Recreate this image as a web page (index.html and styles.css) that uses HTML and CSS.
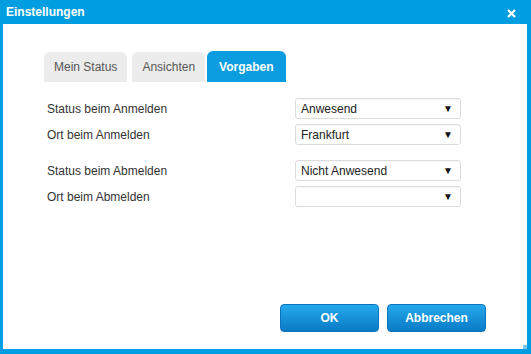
FILE: index.html
```html
<!DOCTYPE html>
<html lang="de">
<head>
<meta charset="utf-8">
<title>Einstellungen</title>
<link rel="stylesheet" href="styles.css">
</head>
<body>
<div class="dialog">
  <div class="titlebar">
    <span class="title">Einstellungen</span>
    <span class="close">
      <svg width="9" height="9" viewBox="0 0 9 9"><path d="M1 1 L8 8 M8 1 L1 8" stroke="#fff" stroke-width="2.2" stroke-linecap="butt"/></svg>
    </span>
  </div>
  <div class="content">
    <div class="tabs">
      <div class="tab">Mein Status</div>
      <div class="tab">Ansichten</div>
      <div class="tab active">Vorgaben</div>
    </div>
    <div class="form">
      <div class="group">
        <div class="row"><span class="label">Status beim Anmelden</span><div class="select"><span>Anwesend</span><span class="arrow">▼</span></div></div>
        <div class="row"><span class="label">Ort beim Anmelden</span><div class="select"><span>Frankfurt</span><span class="arrow">▼</span></div></div>
      </div>
      <div class="group">
        <div class="row"><span class="label">Status beim Abmelden</span><div class="select"><span>Nicht Anwesend</span><span class="arrow">▼</span></div></div>
        <div class="row"><span class="label">Ort beim Abmelden</span><div class="select"><span></span><span class="arrow">▼</span></div></div>
      </div>
    </div>
    <div class="buttons">
      <button class="btn">OK</button>
      <button class="btn">Abbrechen</button>
    </div>
    <div class="grip"></div>
  </div>
</div>
</body>
</html>
```
FILE: styles.css
```css
* { box-sizing: border-box; }
html, body { margin: 0; padding: 0; }
body {
  font-family: "Liberation Sans", Arial, sans-serif;
  font-size: 12px;
  color: #222;
  background: #fff;
}
.dialog {
  width: 531px;
  height: 354px;
  background: #009ee0;
  display: flex;
  flex-direction: column;
  padding: 0 4px 5px 3px;
}
.titlebar {
  height: 24px;
  display: flex;
  align-items: center;
  justify-content: space-between;
  padding: 0 11px 1px 3px;
  color: #fff;
}
.title {
  font-weight: bold;
  font-size: 12px;
}
.close {
  display: flex;
  margin-top: 3px;
}
.content {
  flex: 1;
  background: #fff;
  position: relative;
  display: flex;
  flex-direction: column;
  padding: 27px 0 0 41px;
}
.tabs {
  display: flex;
  align-items: flex-end;
  height: 31px;
}
.tab {
  height: 30px;
  padding: 0 10px;
  margin-right: 5px;
  display: flex;
  align-items: center;
  background: #ececec;
  color: #555;
  border-radius: 6px 6px 0 0;
  font-size: 12px;
}
.tab:nth-child(2) { margin-right: 2px; }
.tab.active {
  height: 31px;
  background: #0b9de0;
  color: #fff;
  font-weight: bold;
  padding: 0 12px;
  margin-right: 0;
}
.form {
  margin-top: 16px;
  margin-left: 3px;
  display: flex;
  flex-direction: column;
  gap: 15px;
}
.group {
  display: flex;
  flex-direction: column;
  gap: 5px;
}
.row {
  display: flex;
  align-items: center;
  height: 21px;
}
.label {
  width: 248px;
  color: #333;
}
.select {
  width: 166px;
  height: 21px;
  border: 1px solid #dcdcdc;
  border-radius: 3px;
  display: flex;
  align-items: center;
  justify-content: space-between;
  padding: 0 7px 0 5px;
  color: #222;
  box-shadow: inset 0 1px 1px rgba(0,0,0,0.03);
}
.arrow {
  font-size: 10px;
  color: #111;
}
.buttons {
  margin-top: auto;
  margin-bottom: 17px;
  margin-right: 41px;
  display: flex;
  justify-content: flex-end;
  gap: 8px;
}
.btn {
  width: 99px;
  height: 28px;
  border: 1px solid #0a74bd;
  border-radius: 4px;
  background: linear-gradient(#25a8ec, #0a7bc7);
  color: #fff;
  font-family: "Liberation Sans", Arial, sans-serif;
  font-weight: bold;
  font-size: 12px;
  padding: 0;
}
.grip {
  position: absolute;
  right: 0;
  bottom: 0;
  width: 4px;
  height: 4px;
  background: #7cc6ec;
}
```
